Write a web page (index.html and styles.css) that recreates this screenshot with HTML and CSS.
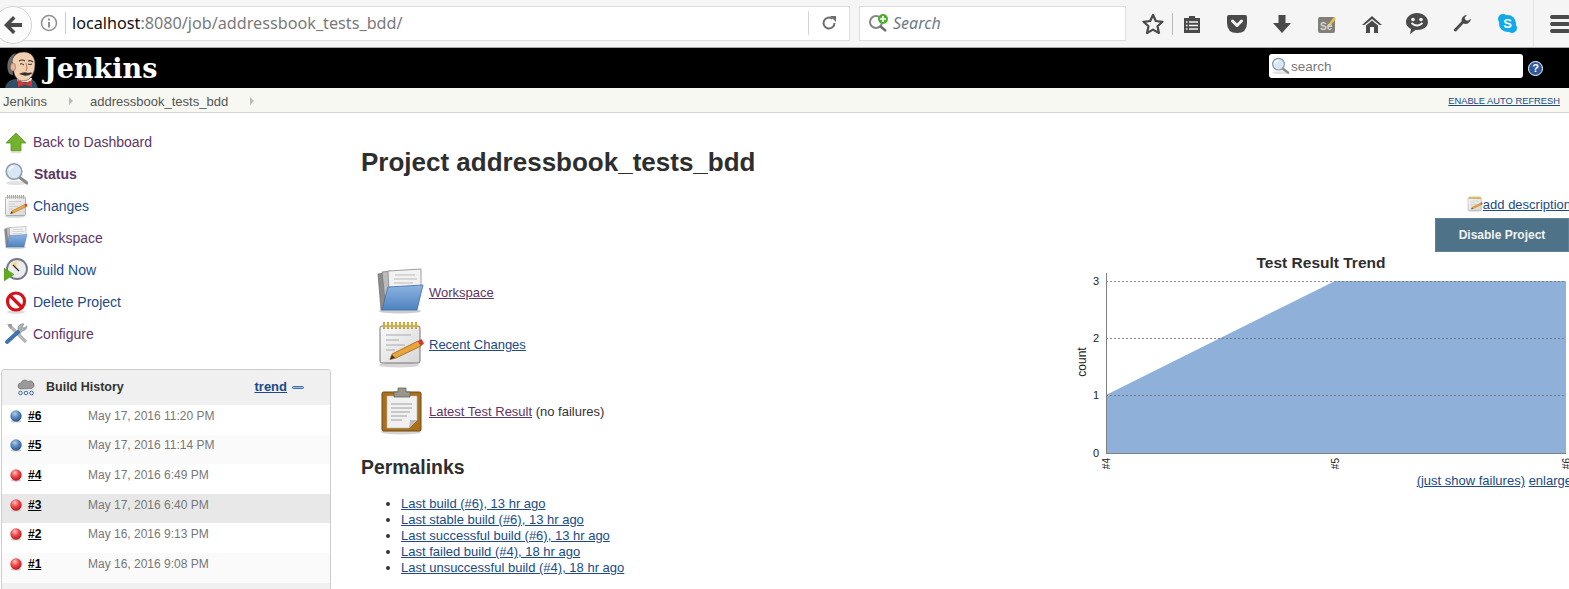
FILE: index.html
```html
<!DOCTYPE html>
<html lang="en">
<head>
  <meta charset="UTF-8" />
  <meta name="viewport" content="width=device-width, initial-scale=1.0" />
  <title>addressbook_tests_bdd [Jenkins]</title>
  <link rel="stylesheet" href="styles.css">
</head>
<body>
  <svg class="icon-defs" aria-hidden="true">
    <defs>
      <radialGradient id="blueBall" cx="40%" cy="30%" r="75%">
        <stop offset="0" stop-color="#b5cfe8" />
        <stop offset="0.45" stop-color="#5a8ac0" />
        <stop offset="1" stop-color="#24507f" />
      </radialGradient>
      <radialGradient id="redBall" cx="40%" cy="30%" r="75%">
        <stop offset="0" stop-color="#ffc4c4" />
        <stop offset="0.45" stop-color="#f24a4d" />
        <stop offset="1" stop-color="#b01015" />
      </radialGradient>
      <linearGradient id="folderBlue" x1="0" y1="0" x2="0" y2="1">
        <stop offset="0" stop-color="#8db4e2" />
        <stop offset="1" stop-color="#4f82c0" />
      </linearGradient>
      <linearGradient id="paper" x1="0" y1="0" x2="1" y2="1">
        <stop offset="0" stop-color="#fbfbfb" />
        <stop offset="1" stop-color="#d6d6d6" />
      </linearGradient>
      <symbol id="i-folder" viewBox="0 0 48 48">
        <ellipse cx="23" cy="43" rx="21" ry="2.5" fill="#ccc" />
        <path d="M1 6 L8 5 L8 41 L4 42 Z" fill="#8c8c8c" stroke="#666" stroke-width=".7" />
        <path d="M5 4 L14 3 L14 40 L9 41 Z" fill="#bbb" stroke="#777" stroke-width=".7" />
        <path d="M11 3 L44 1 L44 20 L12 24 Z" fill="#f2f2f2" stroke="#888" stroke-width=".8" />
        <path d="M18 7 H38 M17 11 H40 M17 15 H36" stroke="#bbb" stroke-width="1" />
        <path d="M11 19 L46 17 L40 42 L5 42 Z" fill="url(#folderBlue)" stroke="#3f6ea8" stroke-width=".8" />
      </symbol>
      <symbol id="i-notepad" viewBox="0 0 48 48">
        <ellipse cx="22" cy="45" rx="20" ry="2.5" fill="#d5d5d5" />
        <rect x="3" y="6" width="40" height="37" rx="2" fill="url(#paper)" stroke="#777" />
        <path d="M7 3 V8 M11 3 V8 M15 3 V8 M19 3 V8 M23 3 V8 M27 3 V8 M31 3 V8 M35 3 V8 M39 3 V8" stroke="#b08a10" stroke-width="2.200" stroke-linecap="round" />
        <path d="M7 3 V8 M11 3 V8 M15 3 V8 M19 3 V8 M23 3 V8 M27 3 V8 M31 3 V8 M35 3 V8 M39 3 V8" stroke="#f3d65a" stroke-width="1" />
        <path d="M9 15 H34 M9 20 H22 M9 25 H28 M9 30 H18" stroke="#aaa" stroke-width="1" />
        <path d="M15 34 L41 21 L44 26 L19 38 L13 39.500 Z" fill="#e9a43a" stroke="#8a5a10" stroke-width=".7" />
        <path d="M41 21 L44.500 19 L47 23.500 L44 26 Z" fill="#d33" />
        <path d="M13 39.500 L15 35 L18 37.800 Z" fill="#333" />
      </symbol>
      <symbol id="i-clipboard" viewBox="0 0 48 48">
        <ellipse cx="24" cy="45" rx="20" ry="2.500" fill="#d5d5d5" />
        <rect x="5" y="5" width="39" height="39" rx="1.500" fill="#a86f1c" stroke="#6f4a10" />
        <path d="M10 9 H40 V33 L32 41 H10 Z" fill="#f1f1f1" stroke="#bbb" stroke-width=".6" />
        <path d="M32 41 L33 33 H40 Z" fill="#bdbdbd" />
        <path d="M14 17 H35 M14 21 H35 M14 25 H33 M14 29 H30 M14 33 H25" stroke="#bbb" stroke-width="1.500" />
        <path d="M17 5 H21 V1 H29 V5 H33 V10 H17 Z" fill="#98978a" stroke="#66665c" stroke-width=".8" />
      </symbol>
      <symbol id="i-up" viewBox="0 0 24 24">
        <path d="M12 3 L22 13 H17 V21 H7 V13 H2 Z" fill="#73b22e" stroke="#5c9a20" stroke-width=".8" />
        <path d="M7 21.500 H17 V23 H7 Z" fill="#ddd" />
      </symbol>
      <symbol id="i-search" viewBox="0 0 24 24">
        <ellipse cx="12" cy="21" rx="10" ry="2" fill="#e2e2e2" />
        <path d="M15 15 L23 21" stroke="#8a8a8a" stroke-width="3.200" stroke-linecap="round" />
        <circle cx="10" cy="9.500" r="7.800" fill="#d8e6f6" stroke="#8c9cae" stroke-width="1.600" />
        <path d="M5.500 9 A5 5 0 0 1 10 4.500" fill="none" stroke="#fff" stroke-width="1.500" />
      </symbol>
      <symbol id="i-clock" viewBox="0 0 24 24">
        <circle cx="13" cy="11" r="10" fill="#ececec" stroke="#75758c" stroke-width="1.800" />
        <path d="M13 3 L7 6 L12 11 Z" fill="#f0dc7a" />
        <path d="M13 11 L9 7 M13 11 L15 13" stroke="#333" stroke-width="1.200" />
        <path d="M0 10 L10 16.500 L0 23 Z" fill="#5fae1e" stroke="#4d8a1c" stroke-width=".5" />
      </symbol>
      <symbol id="i-delete" viewBox="0 0 24 24">
        <ellipse cx="12" cy="22" rx="9" ry="1.800" fill="#ddd" />
        <circle cx="12" cy="11.500" r="8.500" fill="#fff" stroke="#d4141a" stroke-width="3.200" />
        <path d="M6 5.500 L18 17.500" stroke="#d4141a" stroke-width="3.400" />
      </symbol>
      <symbol id="i-tools" viewBox="0 0 24 24">
        <path d="M5 3 L22 20" stroke="#b4b4b4" stroke-width="3.200" />
        <path d="M3 2 L8 2 L7 7 Z" fill="#999" />
        <path d="M20 2 A5 5 0 0 0 14 8 L13 10 L16 12 L18 9 A5 5 0 0 0 23 4 L20 6 L18 5 Z" fill="#a8b0b8" stroke="#777" stroke-width=".5" />
        <path d="M14 10 L3 20" stroke="#3f74b0" stroke-width="4" stroke-linecap="round" />
      </symbol>
      <symbol id="ball-blue" viewBox="0 0 16 16">
        <ellipse cx="8" cy="14" rx="6" ry="1.500" fill="#ccc" />
        <circle cx="8" cy="8" r="6.500" fill="url(#blueBall)" />
      </symbol>
      <symbol id="ball-red" viewBox="0 0 16 16">
        <ellipse cx="8" cy="14" rx="6" ry="1.500" fill="#ccc" />
        <circle cx="8" cy="8" r="6.500" fill="url(#redBall)" />
      </symbol>
    </defs>
  </svg>

  <div class="browser-bar">
    <div class="back-btn">
      <svg width="20" height="20" viewBox="0 0 20 20"><path d="M10 1 L1 10 L10 19 L12.500 16.500 L8 12 H19 V8 H8 L12.500 3.500 Z" fill="#4a4a4a" /></svg>
    </div>
    <div class="url-bar">
      <svg class="info-icon" width="18" height="18" viewBox="0 0 18 18"><circle cx="9" cy="9" r="7.500" fill="none" stroke="#8f8f8f" stroke-width="1.500" /><rect x="8" y="8" width="2" height="5.500" fill="#8f8f8f" /><rect x="8" y="4.500" width="2" height="2" fill="#8f8f8f" /></svg>
      <span class="url-text"><b>localhost</b>:8080/job/addressbook_tests_bdd/</span>
      <span class="reload">
        <svg width="16" height="16" viewBox="0 0 16 16"><path d="M13.500 8 A5.500 5.500 0 1 1 11.500 3.800" fill="none" stroke="#6e6e6e" stroke-width="2" /><path d="M9 1 H15 V7 Z" fill="#6e6e6e" /></svg>
      </span>
    </div>
    <div class="search-bar">
      <svg width="22" height="20" viewBox="0 0 22 20"><circle cx="8" cy="9" r="6" fill="none" stroke="#858585" stroke-width="2" /><path d="M12 13 L18 18" stroke="#6d6d6d" stroke-width="2.500" /><circle cx="15" cy="6" r="5" fill="#4caf2c" /><path d="M15 3 V9 M12 6 H18" stroke="#fff" stroke-width="1.600" /></svg>
      <span>Search</span>
    </div>
    <div class="addon-icons">
      <span class="addon first">
        <svg width="22" height="22" viewBox="0 0 22 22"><path d="M11 2 L13.800 8 L20.500 8.800 L15.500 13.300 L17 20 L11 16.600 L5 20 L6.500 13.300 L1.500 8.800 L8.200 8 Z" fill="none" stroke="#4a4a4a" stroke-width="2.200" stroke-linejoin="round" /></svg>
      </span>
      <span class="addon-sep"></span>
      <span class="addon">
        <svg width="20" height="20" viewBox="0 0 20 20"><path d="M2 4 H7 V2 H13 V4 H18 V19 H2 Z" fill="#4a4a4a" /><path d="M4 8 H5.500 M7 8 H16 M4 11.500 H5.500 M7 11.500 H16 M4 15 H5.500 M7 15 H16" stroke="#f5f5f5" stroke-width="1.500" /></svg>
      </span>
      <span class="addon">
        <svg width="22" height="20" viewBox="0 0 22 20"><path d="M1 3 Q1 1 3 1 H19 Q21 1 21 3 V9 Q21 19 11 19 Q1 19 1 9 Z" fill="#4a4a4a" /><path d="M6.500 7 L11 11.500 L15.500 7" fill="none" stroke="#f5f5f5" stroke-width="3" stroke-linecap="round" stroke-linejoin="round" /></svg>
      </span>
      <span class="addon">
        <svg width="20" height="20" viewBox="0 0 20 20"><path d="M6.500 1 H13.500 V9 H19 L10 19 L1 9 H6.500 Z" fill="#4a4a4a" /></svg>
      </span>
      <span class="addon">
        <svg width="20" height="20" viewBox="0 0 20 20"><rect x="1" y="3" width="17" height="16" rx="2" fill="#807f78" /><path d="M10 12 L17 3 L19 5 L12 13 Z" fill="#e8c14a" /><text x="3" y="16" class="addon-se">Se</text></svg>
      </span>
      <span class="addon">
        <svg width="20" height="20" viewBox="0 0 20 20"><path d="M10 2 L20 11 L17.500 11 L10 5 L2.500 11 L0 11 Z" fill="#4a4a4a" /><path d="M4 11.500 L10 6.500 L16 11.500 V19 H12 V13 H8 V19 H4 Z" fill="#4a4a4a" /></svg>
      </span>
      <span class="addon">
        <svg width="24" height="23" viewBox="0 0 24 23"><path d="M12 1 C18 1 23 5 23 10 C23 15 18 18 12 18 L10.500 18 L5 22 L6 17 C3 15.500 1 13 1 10 C1 5 6 1 12 1 Z" fill="#4a4a4a" /><circle cx="8" cy="7.500" r="1.800" fill="#f5f5f5" /><circle cx="16" cy="7.500" r="1.800" fill="#f5f5f5" /><path d="M6.500 11 Q12 16 17.500 11" fill="none" stroke="#f5f5f5" stroke-width="1.800" /></svg>
      </span>
      <span class="addon">
        <svg width="20" height="20" viewBox="0 0 20 20"><path d="M19 4.500 A5.500 5.500 0 0 1 11.500 9.500 L4 17.500 A1.800 1.800 0 0 1 1.800 15.500 L9.500 7.500 A5.500 5.500 0 0 1 15 1 L12.500 4 L14 6.500 L16.500 6.500 Z" fill="#4a4a4a" /></svg>
      </span>
      <span class="addon">
        <svg width="21" height="21" viewBox="0 0 21 21"><circle cx="6" cy="6" r="5" fill="#11a9e8" /><circle cx="15" cy="15" r="5" fill="#11a9e8" /><circle cx="10.500" cy="10.500" r="8.500" fill="#11a9e8" /><text x="10.500" y="15" class="addon-skype">S</text></svg>
      </span>
      <span class="addon-sep tall"></span>
      <span class="menu-btn"><i></i><i></i><i></i></span>
    </div>
  </div>

  <header class="page-head">
    <svg class="butler" width="34" height="37" viewBox="0 0 34 37">
      <path d="M1 37 C2 32 6 28 12 28 L28 28 C31 30 33 33 34 37 Z" fill="#2f4f66" />
      <path d="M13 27 L28 27 L27 31 L14 31 Z" fill="#f2f2f2" />
      <path d="M14 29 L21 32 L28 29 L28 36 L21 33.500 L14 36 Z" fill="#d33833" />
      <path d="M8 10 C9 4 14 1 20 1 C27 1 31 6 31 13 C31 22 27 30 19 30 C14 30 11 26 10 22 Z" fill="#f3cfb2" stroke="#4a3e38" stroke-width=".6" />
      <path d="M4 20 C2 12 5 4 12 2 C9 5 8 9 8 13 L9 24 C7 24 5 23 4 20 Z" fill="#6a6a6a" />
      <ellipse cx="9" cy="16" rx="2.500" ry="4" fill="#e8b79a" stroke="#7a5a4a" stroke-width=".5" />
      <path d="M15 10 Q18 8 21 10 M24 10 Q27 9 29 11" fill="none" stroke="#3d3531" stroke-width="1.100" />
      <path d="M16 13 Q18 12 20 14 M24 13 Q26 14 28 13" fill="none" stroke="#3d3531" stroke-width="1" />
      <path d="M22 12 Q24 18 22 20" fill="none" stroke="#b07a5c" stroke-width="1" />
      <path d="M15 23 Q20 20 24 22 Q27 21 29 22 Q24 25.500 20 24.500 Z" fill="#3a302c" />
    </svg>
    <span class="brand">Jenkins</span>
    <div class="head-search">
      <svg width="18" height="18" viewBox="0 0 24 24"><use href="#i-search" /></svg>
      <span>search</span>
    </div>
    <span class="help-icon">?</span>
  </header>

  <nav class="breadcrumbs">
    <a class="crumb" href="#">Jenkins</a>
    <span class="crumb-arrow"></span>
    <a class="crumb" href="#">addressbook_tests_bdd</a>
    <span class="crumb-arrow"></span>
    <a class="auto-refresh" href="#">ENABLE AUTO REFRESH</a>
  </nav>

  <div class="page-body">
    <aside class="side-panel">
      <div class="tasks">
        <a class="task visited" href="#"><svg width="24" height="24"><use href="#i-up" /></svg>Back to Dashboard</a>
        <a class="task visited current" href="#"><svg width="24" height="24"><use href="#i-search" /></svg>Status</a>
        <a class="task" href="#"><svg width="24" height="24"><use href="#i-notepad" /></svg>Changes</a>
        <a class="task visited" href="#"><svg width="24" height="24"><use href="#i-folder" /></svg>Workspace</a>
        <a class="task" href="#"><svg width="24" height="24"><use href="#i-clock" /></svg>Build Now</a>
        <a class="task" href="#"><svg width="24" height="24"><use href="#i-delete" /></svg>Delete Project</a>
        <a class="task visited" href="#"><svg width="24" height="24"><use href="#i-tools" /></svg>Configure</a>
      </div>

      <section class="build-history">
        <div class="history-head">
          <svg class="cloud" width="18" height="18" viewBox="0 0 18 18">
            <path d="M4 11 A3 3 0 0 1 4 5 A4 4 0 0 1 11 3.500 A3.500 3.500 0 0 1 15 10.500 Z" fill="#9a9a9a" stroke="#666" stroke-width=".6" />
            <circle cx="3.500" cy="15" r="1.800" fill="none" stroke="#3f6ea8" />
            <circle cx="9" cy="15" r="1.800" fill="none" stroke="#3f6ea8" />
            <circle cx="14.500" cy="15" r="1.800" fill="none" stroke="#3f6ea8" />
          </svg>
          <span class="history-title">Build History</span>
          <a class="trend-link" href="#">trend</a>
          <span class="collapse-icon"></span>
        </div>
        <div class="build-row"><svg width="14" height="14"><use href="#ball-blue" /></svg><a href="#">#6</a><span>May 17, 2016 11:20 PM</span></div>
        <div class="build-row alt"><svg width="14" height="14"><use href="#ball-blue" /></svg><a href="#">#5</a><span>May 17, 2016 11:14 PM</span></div>
        <div class="build-row"><svg width="14" height="14"><use href="#ball-red" /></svg><a href="#">#4</a><span>May 17, 2016 6:49 PM</span></div>
        <div class="build-row hover"><svg width="14" height="14"><use href="#ball-red" /></svg><a href="#">#3</a><span>May 17, 2016 6:40 PM</span></div>
        <div class="build-row"><svg width="14" height="14"><use href="#ball-red" /></svg><a href="#">#2</a><span>May 16, 2016 9:13 PM</span></div>
        <div class="build-row alt"><svg width="14" height="14"><use href="#ball-red" /></svg><a href="#">#1</a><span>May 16, 2016 9:08 PM</span></div>
        <div class="history-foot"></div>
      </section>
    </aside>

    <main class="main-panel">
      <h1>Project addressbook_tests_bdd</h1>
      <div class="main-columns">
        <div class="main-left">
          <div class="main-link first"><svg width="48" height="48"><use href="#i-folder" /></svg><a class="visited" href="#">Workspace</a></div>
          <div class="main-link"><svg width="48" height="48"><use href="#i-notepad" /></svg><a href="#">Recent Changes</a></div>
          <div class="main-link test"><svg width="48" height="48"><use href="#i-clipboard" /></svg><span><a class="visited" href="#">Latest Test Result</a> (no failures)</span></div>
          <h2>Permalinks</h2>
          <ul class="permalinks">
            <li><a href="#">Last build (#6), 13 hr ago</a></li>
            <li><a href="#">Last stable build (#6), 13 hr ago</a></li>
            <li><a href="#">Last successful build (#6), 13 hr ago</a></li>
            <li><a href="#">Last failed build (#4), 18 hr ago</a></li>
            <li><a href="#">Last unsuccessful build (#4), 18 hr ago</a></li>
          </ul>
        </div>
        <div class="main-right">
          <div class="add-description"><svg width="16" height="16"><use href="#i-notepad" /></svg><a href="#">add description</a></div>
          <div class="disable-row"><button class="disable-btn">Disable Project</button></div>
          <svg class="trend-chart" width="509" height="220" viewBox="0 0 509 220">
            <text x="261" y="16" class="chart-title">Test Result Trend</text>
            <polygon points="46,143 275,29 506,29 506,201 46,201" fill="#8eb0d9" />
            <path d="M46 29 H506 M46 86 H506 M46 143 H506" stroke="#6f6f6f" stroke-opacity=".8" stroke-dasharray="2 2" fill="none" shape-rendering="crispEdges" />
            <path d="M46 21 V201 H506" stroke="#808080" fill="none" shape-rendering="crispEdges" />
            <text x="39" y="33" class="tick">3</text>
            <text x="39" y="90" class="tick">2</text>
            <text x="39" y="147" class="tick">1</text>
            <text x="39" y="205" class="tick">0</text>
            <text transform="rotate(-90 26 110)" x="26" y="110" class="axis-name">count</text>
            <text transform="rotate(-90 50 206)" x="50" y="206" class="build-tick">#4</text>
            <text transform="rotate(-90 279 206)" x="279" y="206" class="build-tick">#5</text>
            <text transform="rotate(-90 510 206)" x="510" y="206" class="build-tick">#6</text>
          </svg>
          <div class="chart-links"><a href="#">(just show failures)</a> <a href="#">enlarge</a></div>
        </div>
      </div>
    </main>
  </div>
</body>
</html>
```

FILE: styles.css
```css
html, body {
  height: 589px;
  overflow: hidden;
}
body {
  margin: 0;
  background: #fff;
  color: #333;
  font-family: "Liberation Sans", Arial, sans-serif;
  font-size: 13px;
}
a {
  color: #204a87;
}
a.visited {
  color: #5c3566;
}
.icon-defs {
  position: absolute;
  width: 0;
  height: 0;
}

/* browser chrome */
.browser-bar {
  display: flex;
  align-items: center;
  height: 47px;
  background: #f5f5f5;
  border-bottom: 1px solid #a8a8a8;
  font-family: "Noto Sans", sans-serif;
}
.back-btn {
  flex: none;
  display: flex;
  align-items: center;
  justify-content: center;
  width: 38px;
  height: 38px;
  margin-left: -6px;
  margin-top: 3px;
  border: 1px solid #d2d2d2;
  border-radius: 50%;
  background: #fbfbfb;
  box-sizing: border-box;
  position: relative;
  z-index: 1;
}
.url-bar {
  flex: none;
  display: flex;
  align-items: center;
  width: 832px;
  height: 35px;
  margin-left: -14px;
  margin-top: -1px;
  background: #fff;
  border: 1px solid #dedede;
  box-sizing: border-box;
}
.info-icon {
  margin-left: 21px;
  padding-right: 7px;
  border-right: 1px solid #ccc;
  height: 22px;
  box-sizing: content-box;
}
.url-text {
  margin-left: 6px;
  font-size: 16.200px;
  color: #7a7a7a;
  white-space: nowrap;
}
.url-text b {
  font-weight: 400;
  color: #111;
}
.reload {
  display: flex;
  justify-content: center;
  align-items: center;
  height: 24px;
  width: 40px;
  margin-left: auto;
  border-left: 1px solid #d5d5d5;
}
.search-bar {
  flex: none;
  display: flex;
  align-items: center;
  gap: 3px;
  width: 267px;
  height: 35px;
  margin-left: 9px;
  margin-top: -1px;
  padding-left: 8px;
  background: #fff;
  border: 1px solid #dedede;
  box-sizing: border-box;
  font-size: 16px;
  font-style: italic;
  color: #6d7a86;
}
.addon-icons {
  flex: none;
  display: flex;
  align-items: center;
  margin-left: 15px;
  height: 47px;
}
.addon {
  flex: none;
  display: flex;
  justify-content: center;
  width: 24px;
  margin-right: 21px;
}
.addon.first {
  margin-right: 7px;
}
.addon-sep {
  flex: none;
  width: 1px;
  height: 22px;
  background: #bbb;
  margin-right: 7px;
}
.addon-sep.tall {
  height: 47px;
  background: #e2e2e2;
  margin-left: -7px;
  margin-right: 16px;
}
.addon-se {
  font-family: "Liberation Sans", sans-serif;
  font-size: 10px;
  font-weight: 700;
  fill: #d5d5d0;
}
.addon-skype {
  font-family: "Liberation Sans", sans-serif;
  font-size: 13px;
  font-weight: 700;
  fill: #fff;
  text-anchor: middle;
}
.menu-btn {
  flex: none;
  display: flex;
  flex-direction: column;
  gap: 3px;
  width: 20px;
}
.menu-btn i {
  display: block;
  height: 4px;
  background: #4a4a4a;
  border-radius: 2px;
}

/* jenkins header */
.page-head {
  display: flex;
  align-items: center;
  height: 40px;
  background: #000;
}
.butler {
  flex: none;
  margin-left: 4px;
  align-self: flex-end;
}
.brand {
  margin-left: 6px;
  font-family: "DejaVu Serif", serif;
  font-size: 27px;
  font-weight: 700;
  color: #fff;
}
.head-search {
  display: flex;
  align-items: center;
  gap: 2px;
  width: 254px;
  height: 24px;
  margin-left: auto;
  margin-bottom: 4px;
  padding-left: 2px;
  box-sizing: border-box;
  background: #fff;
  border-radius: 3px;
  color: #777;
  font-size: 13.500px;
}
.help-icon {
  flex: none;
  width: 13px;
  height: 13px;
  margin: 0 26px 0 5px;
  background: #2e5a9c;
  border: 1px solid #fff;
  border-radius: 50%;
  color: #fff;
  font-size: 11px;
  font-weight: 700;
  line-height: 13px;
  text-align: center;
}
.breadcrumbs {
  display: flex;
  align-items: center;
  height: 22px;
  padding: 2px 9px 0 3px;
  background: #f6f8f1;
  border-bottom: 1px solid #d3d7cf;
}
.crumb {
  color: #555;
  text-decoration: none;
  font-size: 13px;
}
.crumb-arrow {
  width: 0;
  height: 0;
  margin: 0 17px 0 22px;
  border-left: 4px solid #bbb;
  border-top: 4px solid transparent;
  border-bottom: 4px solid transparent;
}
.auto-refresh {
  margin-left: auto;
  font-size: 9.330px;
}

/* page */
.page-body {
  display: flex;
}
.side-panel {
  flex: none;
  width: 331px;
  padding: 13px 0 0 1px;
}
.tasks {
  margin-bottom: 19px;
}
.task {
  display: flex;
  align-items: center;
  gap: 5px;
  height: 32px;
  padding-left: 3px;
  text-decoration: none;
  font-size: 14px;
}
.task.current {
  font-weight: 700;
  gap: 6px;
}
.build-history {
  width: 330px;
  box-sizing: border-box;
  border: 1px solid #ccc;
  border-bottom: 0;
  border-radius: 4px 4px 0 0;
  overflow: hidden;
}
.history-head {
  display: flex;
  align-items: center;
  height: 33px;
  padding-bottom: 2px;
  background: #f0f0f0;
  font-size: 12.500px;
  font-weight: 700;
}
.cloud {
  margin-left: 15px;
}
.history-title {
  margin-left: 11px;
}
.trend-link {
  margin-left: auto;
  font-size: 13px;
}
.collapse-icon {
  width: 12px;
  height: 3px;
  margin: 2px 26px 0 5px;
  background: #a9c1e0;
  border: 1px solid #3f6ea8;
  border-radius: 2px;
  box-sizing: border-box;
}
.build-row {
  display: flex;
  align-items: center;
  height: 29.600px;
  padding-bottom: 8px;
  box-sizing: border-box;
  background: #fff;
  font-size: 12px;
  color: #777;
}
.build-row.alt {
  background: #fafafa;
}
.build-row.hover {
  background: #e8e8e8;
}
.build-row svg {
  margin-left: 7px;
}
.build-row a {
  width: 60px;
  margin-left: 5px;
  color: #000;
  font-weight: 700;
}
.history-foot {
  height: 20px;
  background: #f0f0f0;
}
.main-panel {
  flex: 1;
  min-width: 0;
  padding-left: 29px;
}
h1 {
  margin: 33px 0 0;
  font-size: 26px;
  line-height: 32px;
  color: #2e2e2e;
}
.main-columns {
  display: flex;
  justify-content: space-between;
}
.main-left {
  padding-top: 90px;
}
.main-link {
  display: flex;
  align-items: center;
  gap: 4px;
  height: 48px;
  margin: 0 0 4px 16px;
  white-space: nowrap;
}
.main-link.test {
  margin-top: 19px;
  margin-bottom: 0;
}
h2 {
  margin: 19px 0 0;
  font-size: 19.400px;
  line-height: 26px;
  color: #2e2e2e;
}
.permalinks {
  margin: 16px 0 0;
  padding-left: 40px;
  line-height: 16px;
}
.main-right {
  flex: none;
  width: 509px;
  padding-top: 18px;
}
.add-description {
  display: flex;
  align-items: center;
  justify-content: flex-end;
  height: 16px;
  margin-right: -2px;
}
.disable-row {
  display: flex;
  justify-content: flex-end;
  margin-top: 6px;
}
.disable-btn {
  width: 134px;
  height: 34px;
  padding: 0;
  background: #4e7389;
  border: 1px solid #5c8199;
  color: #f2f2f2;
  font-family: "Liberation Sans", sans-serif;
  font-size: 12px;
  font-weight: 700;
}
.trend-chart {
  display: block;
  font-family: "Liberation Sans", sans-serif;
}
.chart-title {
  font-size: 15.500px;
  font-weight: 700;
  fill: #2e2e2e;
  text-anchor: middle;
}
.tick {
  font-size: 11px;
  fill: #222;
  text-anchor: end;
}
.axis-name {
  font-size: 12px;
  fill: #222;
  text-anchor: middle;
}
.build-tick {
  font-size: 10px;
  fill: #222;
  text-anchor: end;
}
.chart-links {
  margin-top: 1px;
  margin-right: -3px;
  text-align: right;
  white-space: nowrap;
}
```
